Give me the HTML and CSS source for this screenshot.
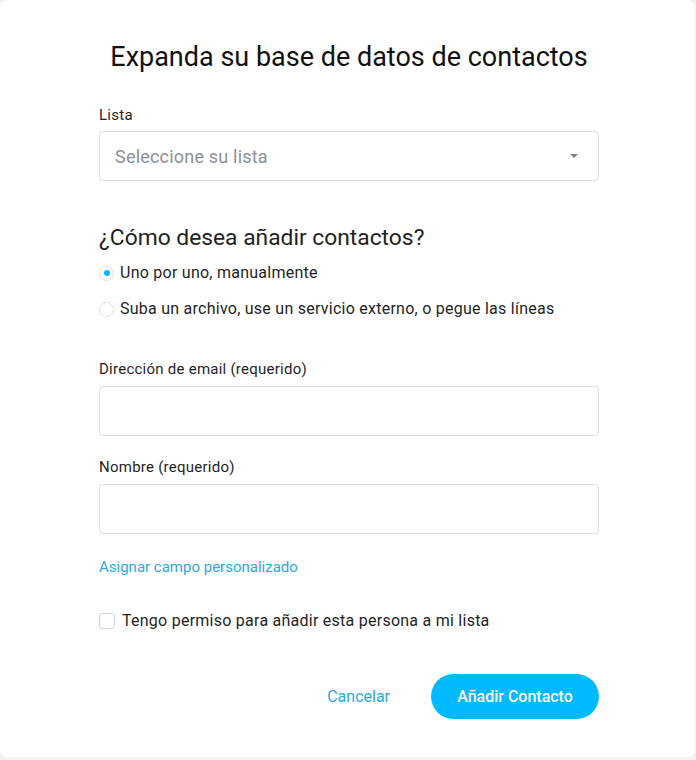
FILE: index.html
```html
<!DOCTYPE html>
<html lang="es">
<head>
    <meta charset="UTF-8">
    <meta name="viewport" content="width=device-width, initial-scale=1.0">
    <title>Añadir contactos</title>
    <link rel="stylesheet" href="styles.css">
</head>
<body>
    <div class="tarjeta">
        <h1 class="titulo">Expanda su base de datos de contactos</h1>

        <div class="campo campo-lista">
            <label class="etiqueta" for="lista">Lista</label>
            <div class="selector" id="lista">
                <span>Seleccione su lista</span>
                <span class="flecha"></span>
            </div>
        </div>

        <h2 class="subtitulo">¿Cómo desea añadir contactos?</h2>
        <div class="opciones">
            <label class="opcion"><span class="radio marcado"></span>Uno por uno, manualmente</label>
            <label class="opcion"><span class="radio"></span>Suba un archivo, use un servicio externo, o pegue las líneas</label>
        </div>

        <div class="campo campo-email">
            <label class="etiqueta" for="email">Dirección de email (requerido)</label>
            <input class="entrada" type="text" id="email">
        </div>
        <div class="campo campo-nombre">
            <label class="etiqueta" for="nombre">Nombre (requerido)</label>
            <input class="entrada" type="text" id="nombre">
        </div>

        <a class="enlace" href="#">Asignar campo personalizado</a>

        <label class="permiso"><span class="casilla"></span>Tengo permiso para añadir esta persona a mi lista</label>

        <div class="acciones">
            <a class="cancelar" href="#">Cancelar</a>
            <button class="boton" type="button">Añadir Contacto</button>
        </div>
    </div>
</body>
</html>
```
FILE: styles.css
```css
*{
    margin: 0;
    box-sizing: border-box;
}
:root{
    --fondo:#f1f2f4;
    --texto:#1f1f1f;
    --borde:#dcdfe3;
    --azul:#00b9ff;
    --enlace:#2fa8e0;
}
html, body{
    background-color: var(--fondo);
    font-family: Roboto, "Noto Sans", sans-serif;
    color: var(--texto);
}
.tarjeta{
    width: 695px;
    height: 757px;
    background-color: white;
    border-radius: 8px;
    padding: 41px 96px 0 99px;
    display: flex;
    flex-direction: column;
}
.titulo{
    font-size: 27px;
    font-weight: 400;
    text-align: center;
    line-height: 32px;
    color: #111;
}
.campo{
    display: flex;
    flex-direction: column;
}
.campo-lista{
    margin-top: 33px;
}
.etiqueta{
    font-size: 15px;
    line-height: 18px;
    letter-spacing: 0.25px;
    margin-bottom: 8px;
}
.campo-lista .etiqueta{
    margin-bottom: 7px;
}
.selector{
    height: 50px;
    border: 1px solid var(--borde);
    border-radius: 4px;
    display: flex;
    align-items: center;
    justify-content: space-between;
    padding: 0 20px 0 15px;
    font-size: 18px;
    letter-spacing: 0.2px;
    color: #8b9099;
}
.flecha{
    width: 0;
    height: 0;
    border-left: 4px solid transparent;
    border-right: 4px solid transparent;
    border-top: 4px solid #7d8289;
}
.subtitulo{
    font-size: 22.8px;
    font-weight: 400;
    line-height: 28px;
    margin-top: 43px;
}
.opciones{
    display: flex;
    flex-direction: column;
    gap: 16px;
    margin-top: 11px;
}
.opcion{
    display: flex;
    align-items: center;
    font-size: 16px;
    line-height: 20px;
    letter-spacing: 0.25px;
}
.radio{
    width: 15px;
    height: 15px;
    border: 1px solid var(--borde);
    border-radius: 50%;
    margin-right: 6px;
    display: grid;
    place-items: center;
}
.radio.marcado::after{
    content: "";
    width: 6px;
    height: 6px;
    border-radius: 50%;
    background-color: var(--azul);
}
.campo-email{
    margin-top: 41px;
}
.campo-nombre{
    margin-top: 22px;
}
.entrada{
    height: 50px;
    border: 1px solid var(--borde);
    border-radius: 4px;
    font: inherit;
}
.enlace{
    margin-top: 24px;
    font-size: 15px;
    line-height: 18px;
    color: var(--enlace);
    text-decoration: none;
    align-self: flex-start;
}
.permiso{
    margin-top: 35px;
    display: flex;
    align-items: center;
    font-size: 16px;
    line-height: 20px;
    letter-spacing: 0.25px;
}
.casilla{
    width: 16px;
    height: 16px;
    border: 1px solid #cfd3d8;
    border-radius: 3px;
    margin-right: 7px;
}
.acciones{
    margin-top: 43px;
    display: flex;
    justify-content: flex-end;
    align-items: center;
    gap: 41px;
}
.cancelar{
    color: var(--enlace);
    text-decoration: none;
    font-size: 16px;
}
.boton{
    width: 168px;
    height: 45px;
    border: none;
    border-radius: 23px;
    background-color: var(--azul);
    color: white;
    font: 500 16px Roboto, sans-serif;
    cursor: pointer;
}
```
